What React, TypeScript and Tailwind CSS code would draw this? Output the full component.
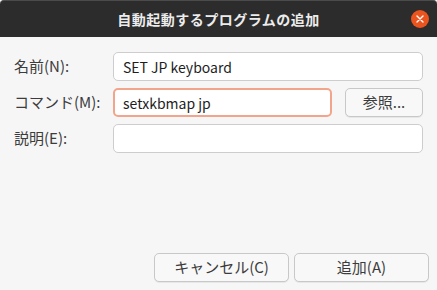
import React, { useState } from "react";

const font = { fontFamily: '"Noto Sans CJK JP", "Noto Sans", sans-serif' };

function Field({ label, value, focused }: { label: string; value: string; focused?: boolean }) {
  return (
    <input
      readOnly
      value={value}
      aria-label={label}
      className={
        focused
          ? "h-[29px] w-full rounded-[5px] border-2 border-[#f3a58b] bg-white px-[8px] text-[14px] text-[#1e1e1e] outline-none"
          : "h-[29px] w-full rounded-[5px] border border-[#cdcdcd] bg-white px-[9px] text-[14px] text-[#1e1e1e] outline-none"
      }
      style={font}
    />
  );
}

function Button({ children, className }: { children: React.ReactNode; className?: string }) {
  return (
    <button
      className={
        "h-[29px] rounded-[5px] border border-[#c8c8c8] bg-[#f8f8f8] text-[15px] text-[#3c3c3c] shadow-[0_1px_0_rgba(0,0,0,0.06)] " +
        (className ?? "")
      }
      style={font}
    >
      {children}
    </button>
  );
}

export default function App() {
  const [name] = useState("SET JP keyboard");
  const [command] = useState("setxkbmap jp");

  return (
    <div className="flex h-[290px] w-[437px] flex-col bg-[#f6f6f6]" style={font}>
      {/* Title bar */}
      <div className="grid h-[37px] shrink-0 grid-cols-[1fr_auto_1fr] items-center rounded-t-[4px] border-t border-[#4b4b4b] bg-[#2c2c2c]">
        <div />
        <div className="text-[14px] font-bold tracking-[0.5px] text-[#ececec]">自動起動するプログラムの追加</div>
        <div className="flex justify-end pr-[8px]">
          <div className="flex h-[18px] w-[18px] items-center justify-center rounded-full bg-[#e9541f]">
            <svg width="8" height="8" viewBox="0 0 8 8">
              <path d="M1 1L7 7M7 1L1 7" stroke="white" strokeWidth="1.4" strokeLinecap="round" />
            </svg>
          </div>
        </div>
      </div>

      {/* Form */}
      <div className="flex flex-col gap-[7px] pl-[14px] pr-[14px] pt-[15px]">
        <div className="flex items-center">
          <span className="w-[99px] shrink-0 text-[15px] text-[#3c3c3c]">名前(N):</span>
          <Field label="名前" value={name} />
        </div>
        <div className="flex items-center">
          <span className="w-[99px] shrink-0 text-[15px] text-[#3c3c3c]">コマンド(M):</span>
          <div className="flex flex-1 items-center gap-[13px]">
            <Field label="コマンド" value={command} focused />
            <Button className="w-[78px] shrink-0">参照...</Button>
          </div>
        </div>
        <div className="flex items-center">
          <span className="w-[99px] shrink-0 text-[15px] text-[#3c3c3c]">説明(E):</span>
          <Field label="説明" value="" />
        </div>
      </div>

      <div className="flex-1" />

      {/* Actions */}
      <div className="flex justify-end gap-[5px] pb-[8px] pr-[8px]">
        <Button className="w-[135px]">キャンセル(C)</Button>
        <Button className="w-[135px]">追加(A)</Button>
      </div>
    </div>
  );
}
